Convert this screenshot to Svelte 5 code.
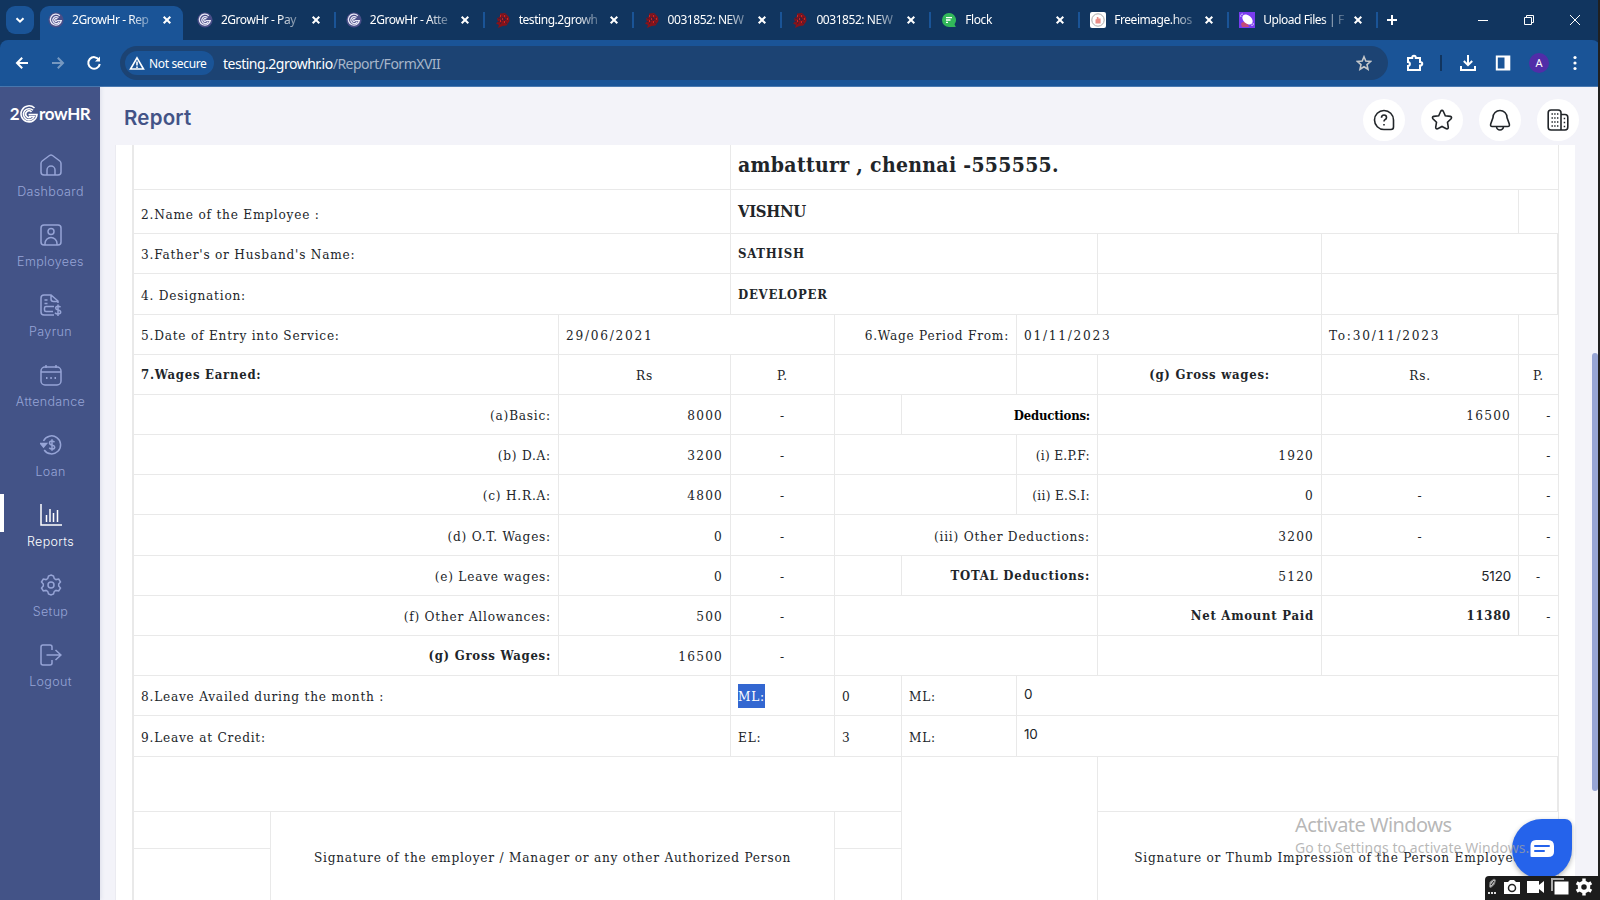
<script lang="ts">
    type Cell = {
        t?: string;
        span?: number;
        rows?: number;
        cls?: string;
    };

    const tabs = [
        { title: "2GrowHr - Rep", icon: "grow", active: true },
        { title: "2GrowHr - Pay", icon: "grow" },
        { title: "2GrowHr - Atte", icon: "grow" },
        { title: "testing.2growh", icon: "mantis" },
        { title: "0031852: NEW |", icon: "mantis" },
        { title: "0031852: NEW |", icon: "mantis" },
        { title: "Flock", icon: "flock" },
        { title: "Freeimage.hos", icon: "free" },
        { title: "Upload Files | F", icon: "upload" },
    ];

    const menu = [
        "Dashboard",
        "Employees",
        "Payrun",
        "Attendance",
        "Loan",
        "Reports",
        "Setup",
        "Logout",
    ];

    const columns = [137, 288, 172, 104, 67, 115, 81, 224, 197, 40];

    const earning = (label: string, amount: string, bold = ""): Cell[] => [
        { t: label, span: 2, cls: "right " + bold },
        { t: amount, cls: "right num" },
        { t: "-", cls: "center" },
    ];

    const rows: { h: number; cells: Cell[] }[] = [
        {
            h: 45,
            cells: [
                { span: 3 },
                { t: "ambatturr , chennai -555555.", span: 7, cls: "address" },
            ],
        },
        {
            h: 44,
            cells: [
                { t: "2.Name of the Employee :", span: 3, cls: "low" },
                { t: "VISHNU", span: 6, cls: "name" },
                {},
            ],
        },
        {
            h: 40,
            cells: [
                { t: "3.Father's or Husband's Name:", span: 3 },
                { t: "SATHISH", span: 4, cls: "bold" },
                {},
                { span: 2, cls: "edge" },
            ],
        },
        {
            h: 41,
            cells: [
                { t: "4. Designation:", span: 3 },
                { t: "DEVELOPER", span: 4, cls: "bold" },
                {},
                { span: 2, cls: "edge" },
            ],
        },
        {
            h: 40,
            cells: [
                { t: "5.Date of Entry into Service:", span: 2 },
                { t: "29/06/2021", span: 2, cls: "date" },
                { t: "6.Wage Period From:", span: 2, cls: "right" },
                { t: "01/11/2023", span: 2, cls: "date" },
                { t: "To:30/11/2023", cls: "date" },
                {},
            ],
        },
        {
            h: 40,
            cells: [
                { t: "7.Wages Earned:", span: 2, cls: "bold" },
                { t: "Rs", cls: "center" },
                { t: "P.", cls: "center" },
                { span: 2 },
                {},
                { t: "(g) Gross wages:", cls: "bold center" },
                { t: "Rs.", cls: "center" },
                { t: "P.", cls: "center" },
            ],
        },
        {
            h: 40,
            cells: [
                ...earning("(a)Basic:", "8000"),
                {},
                { t: "Deductions:", span: 2, cls: "right tight" },
                {},
                { t: "16500", cls: "right num" },
                { t: "-", cls: "right" },
            ],
        },
        {
            h: 40,
            cells: [
                ...earning("(b) D.A:", "3200"),
                { span: 2 },
                { t: "(i) E.P.F:", cls: "right initials" },
                { t: "1920", cls: "right num" },
                {},
                { t: "-", cls: "right" },
            ],
        },
        {
            h: 40,
            cells: [
                ...earning("(c) H.R.A:", "4800"),
                { span: 2 },
                { t: "(ii) E.S.I:", cls: "right initials" },
                { t: "0", cls: "right num" },
                { t: "-", cls: "center" },
                { t: "-", cls: "right" },
            ],
        },
        {
            h: 41,
            cells: [
                ...earning("(d) O.T. Wages:", "0"),
                { t: "(iii) Other Deductions:", span: 3, cls: "right" },
                { t: "3200", cls: "right num" },
                { t: "-", cls: "center" },
                { t: "-", cls: "right" },
            ],
        },
        {
            h: 40,
            cells: [
                ...earning("(e) Leave wages:", "0"),
                {},
                { t: "TOTAL Deductions:", span: 2, cls: "right bold" },
                { t: "5120", cls: "right num" },
                { t: "5120", cls: "right sans" },
                { t: "-", cls: "center" },
            ],
        },
        {
            h: 40,
            cells: [
                ...earning("(f) Other Allowances:", "500"),
                { span: 3 },
                { t: "Net Amount Paid", cls: "right bold" },
                { t: "11380", cls: "right bold" },
                { t: "-", cls: "right" },
            ],
        },
        {
            h: 40,
            cells: [
                ...earning("(g) Gross Wages:", "16500", "bold"),
                { span: 3 },
                {},
                { span: 2 },
            ],
        },
        {
            h: 40,
            cells: [
                { t: "8.Leave Availed during the month :", span: 3 },
                { t: "ML:", cls: "selected" },
                { t: "0", cls: "num" },
                { t: "ML:" },
                { t: "0", span: 4, cls: "sans up" },
            ],
        },
        {
            h: 41,
            cells: [
                { t: "9.Leave at Credit:", span: 3 },
                { t: "EL:" },
                { t: "3", cls: "num" },
                { t: "ML:" },
                { t: "10", span: 4, cls: "sans up" },
            ],
        },
        {
            h: 55,
            cells: [
                { span: 5 },
                { span: 2, rows: 3 },
                { span: 3, cls: "edge" },
            ],
        },
        {
            h: 37,
            cells: [
                {},
                {
                    t: "Signature of the employer / Manager or any other Authorized Person",
                    span: 3,
                    rows: 2,
                    cls: "center",
                },
                {},
                {
                    t: "Signature or Thumb Impression of the Person Employed",
                    span: 3,
                    rows: 2,
                    cls: "center",
                },
            ],
        },
        { h: 53, cells: [{}, {}] },
    ];
</script>

<div class="screen">
    <div class="tab-strip">
        <button class="tab-search" aria-label="Search tabs">
            <svg width="12" height="12" viewBox="0 0 12 12"
                ><path d="M2.5 4.2 6 7.7l3.5-3.5" class="line" /></svg
            >
        </button>
        <div class="tabs">
            {#each tabs as tab}
                <div class="tab" class:active={tab.active}>
                    <svg
                        class="favicon"
                        width="16"
                        height="16"
                        viewBox="0 0 16 16"
                    >
                        {#if tab.icon === "grow"}
                            <circle cx="8" cy="8" r="7.6" fill="#4a4e88" />
                            <g fill="none" stroke="#e9e9f6" stroke-width="1.3">
                                <path d="M11.8 3.8A5.5 5.5 0 1 0 13.3 8.6H8.5" />
                                <path d="M10.5 5.4A3.5 3.5 0 1 0 11.3 9.9" />
                                <path d="M9.3 7A1.5 1.5 0 1 0 9 9.3" />
                            </g>
                        {:else if tab.icon === "mantis"}
                            <path
                                d="M5 1.5 10 1l4 4 .5 4-3 4.5-4 .5-4.5 2 1-3-3-1.500 2-2-1-3 3-2z"
                                fill="#86131a"
                            />
                            <path
                                d="M3 6l10 2M5 3l7 9M10 2 5 13M3 10l9-5"
                                stroke="#35213f"
                                stroke-width="1"
                                stroke-dasharray="2 1"
                            />
                            <path
                                d="M5 4h1M9 4h1M7 7h1M12 7h1M5 9h1M9 10h1"
                                stroke="#f02820"
                                stroke-width="1.4"
                            />
                        {:else if tab.icon === "flock"}
                            <path
                                d="M8 1a7 7 0 1 0 0 14h6.800l-1.300-2.700A7 7 0 0 0 8 1z"
                                fill="#32b85a"
                            />
                            <path
                                d="M5 5.6h6M5 8h4.5M5 10.4h2"
                                stroke="#fff"
                                stroke-width="1.3"
                            />
                        {:else if tab.icon === "free"}
                            <rect width="16" height="16" rx="2" fill="#fff" />
                            <circle
                                cx="8"
                                cy="8"
                                r="6.2"
                                fill="none"
                                stroke="#aaa"
                            />
                            <path
                                d="M5.5 11.5v-4l1.3-.4V5h1.6v1.5h2.2v5z"
                                fill="#ea8d87"
                            />
                        {:else}
                            <rect width="16" height="16" fill="#7a3cf0" />
                            <path d="M2 12c1-3 6-4 8 3H3z" fill="#c44b7a" />
                            <ellipse
                                cx="8.5"
                                cy="7.5"
                                rx="6"
                                ry="4"
                                transform="rotate(42 8.5 7.5)"
                                fill="#fff"
                            />
                            <path
                                d="M2 5C1 3 2 2 4 2m8 11c2 1 3 0 2-2"
                                stroke="#d9c5ff"
                                fill="none"
                            />
                        {/if}
                    </svg>
                    <span class="tab-title">{tab.title}</span>
                    <svg width="10" height="10" viewBox="0 0 10 10"
                        ><path d="m1.7 1.7 6.6 6.6m0-6.6L1.7 8.3" class="line" /></svg
                    >
                </div>
            {/each}
        </div>
        <svg class="new-tab" width="12" height="12" viewBox="0 0 12 12"
            ><path d="M6 1v10M1 6h10" class="line" /></svg
        >
        <div class="window-controls">
            <svg width="12" height="12" viewBox="0 0 12 12"
                ><path d="M1 6.5h10" class="thin" /></svg
            >
            <svg width="12" height="12" viewBox="0 0 12 12"
                ><path d="M1.5 3.5h7v7h-7zM3.5 3.5v-2h7v7h-2" class="thin" /></svg
            >
            <svg width="12" height="12" viewBox="0 0 12 12"
                ><path d="m1 1 10 10m0-10L1 11" class="thin" /></svg
            >
        </div>
    </div>

    <div class="toolbar">
        <div class="nav">
            <svg width="16" height="16" viewBox="0 0 16 16"
                ><path d="M14 8H3m5.2-5.2L3 8l5.2 5.2" class="line" /></svg
            >
            <svg class="dim" width="16" height="16" viewBox="0 0 16 16"
                ><path d="M2 8h11M7.8 2.8 13 8l-5.2 5.2" class="line" /></svg
            >
            <svg width="16" height="16" viewBox="0 0 16 16"
                ><path d="M13 4.8A5.8 5.8 0 1 0 13.800 9" class="line" /><path
                    d="M14 1.5v5H9z"
                    fill="#fff"
                /></svg
            >
        </div>
        <div class="address-bar">
            <div class="chip">
                <svg width="16" height="14" viewBox="0 0 16 14"
                    ><path d="M8 1.8 14.5 13h-13z" class="line" /><path
                        d="M8 5.5v4m0 1V12"
                        class="line"
                    /></svg
                >
                <span>Not secure</span>
            </div>
            <span class="url">testing.2growhr.io<i>/Report/FormXVII</i></span>
            <svg class="bookmark" width="16" height="16" viewBox="0 0 16 16"
                ><path
                    d="m8 1.8 1.8 4.3 4.7.4L11 9.6l1 4.6-4-2.5-4 2.500 1-4.600-3.500-3.100 4.700-.4z"
                /></svg
            >
        </div>
        <div class="tools">
            <svg width="18" height="18" viewBox="0 0 18 18"
                ><path
                    d="M2 4h4.2c0-3 3.6-3 3.6 0H14v4c3 0 3 3.6 0 3.6V16H2v-4c2.5-.3 2.5-3.7 0-4z"
                    class="line"
                /></svg
            >
            <span class="bar"></span>
            <svg width="18" height="18" viewBox="0 0 18 18"
                ><path d="M9 1v10M4.8 7 9 11.2 13.2 7M2 12v4h14v-4" class="line" /></svg
            >
            <svg width="16" height="16" viewBox="0 0 16 16"
                ><rect x="1.8" y="1.5" width="12.5" height="13" class="line" /><path
                    d="M9.5 2h5v12h-5z"
                    fill="#fff"
                /></svg
            >
            <span class="avatar">A</span>
            <svg class="more" width="4" height="16" viewBox="0 0 4 16" fill="#fff"
                ><circle cx="2" cy="2.5" r="1.6" /><circle
                    cx="2"
                    cy="8"
                    r="1.6"
                /><circle cx="2" cy="13.5" r="1.6" /></svg
            >
        </div>
    </div>

    <div class="app">
        <aside class="sidebar">
            <div class="logo">
                <span>2</span>
                <svg width="18" height="18" viewBox="0 0 18 18"
                    ><path d="M14.5 3A8 8 0 1 0 17 9.500H8.500" /><path
                        d="M13 5.3a5.6 5.6 0 1 0 1.2 6.2H9"
                    /><path d="M11.5 7a3.3 3.3 0 1 0-.5 4.800" /></svg
                >
                <span>rowHR</span>
            </div>
            {#each menu as item}
                <div class="menu-item" class:current={item === "Reports"}>
                    <svg width="22" height="22" viewBox="0 0 22 22">
                        {#if item === "Dashboard"}
                            <path
                                d="M1 9.5Q1 8 2.2 7L9.5 1.5q1.5-1 3 0L19.8 7Q21 8 21 9.5V18q0 3-3 3H4q-3 0-3-3z"
                            />
                            <path d="M7 21v-5a4 4 0 0 1 8 0v5" />
                        {:else if item === "Employees"}
                            <rect x="1" y="1" width="20" height="20" rx="3" />
                            <circle cx="11" cy="7.5" r="3" />
                            <path d="M5 21v-1.500a6 6 0 0 1 12 0V21" />
                        {:else if item === "Payrun"}
                            <path
                                d="M14 21H4q-3 0-3-3V4q0-3 3-3h7l7 6v2M11 1v4q0 2.5 2.5 2.5H18M4.5 6h3M4.5 9.5h3M14 12.5H6q-1.5 0-1.5 1.5v2q0 1.5 1.5 1.5h7"
                            />
                            <path
                                d="M20.5 13.2q-1-1.2-2.5-1-2.3 0-2.3 1.8 0 1.5 2.3 1.9 2.7.5 2.7 2.2 0 2-2.7 2-2 0-3-1.4M18 10.5V22"
                            />
                        {:else if item === "Attendance"}
                            <rect x="1" y="3" width="20" height="18" rx="4" />
                            <path d="M1 8h20M6 1v3M16 1v3" />
                            <path
                                d="M6 14h1.5M10.3 14h1.5M14.5 14H16"
                                class="dots"
                            />
                        {:else if item === "Loan"}
                            <path d="M3.5 7a9 9 0 1 1 .7 9" />
                            <path d="M.5 9.5h6L3.500 13z" fill="currentColor" />
                            <path
                                d="M14.5 8.2Q13.6 7 12 7 9.5 7 9.5 9q0 1.6 2.5 2t2.7 2.2Q14.7 15 12 15q-1.8 0-2.7-1.3M12 5.2v11.6"
                            />
                        {:else if item === "Reports"}
                            <path d="M1 0v21h21" />
                            <path d="M6.5 11v7M10 5v13M13.5 9v9M17.5 6v12" />
                        {:else if item === "Setup"}
                            <path
                                d="m11 1 2.5 1 .8 2.6 1.7 1 2.7-.6 1.8 3-1.8 2v2l1.8 2-1.8 3-2.7-.6-1.7 1-.8 2.6L11 21l-2.5-1-.8-2.6-1.7-1-2.7.6-1.8-3 1.8-2v-2l-1.8-2 1.8-3 2.7.6 1.7-1L8.500 2z"
                            />
                            <circle cx="11" cy="11" r="3" />
                        {:else}
                            <path
                                d="M12 6V3q0-2-2-2H3Q1 1 1 3v16q0 2 2 2h7q2 0 2-2v-3M6.5 11H21M15.5 6l5.5 5-5.5 5"
                            />
                        {/if}
                    </svg>
                    <span>{item}</span>
                </div>
            {/each}
        </aside>

        <main>
            <header>
                <h1>Report</h1>
                <div class="actions">
                    <button aria-label="Help">
                        <svg width="22" height="22" viewBox="0 0 22 22"
                            ><path d="M11 1.5a9.5 9.5 0 0 0 0 19h7q2.5 0 2.5-2.5v-7A9.5 9.5 0 0 0 11 1.5z" /><path
                                d="M8.5 8.8q0-2.8 2.5-2.8t2.5 2.4q0 1.4-1.3 2.1T11 12.5m0 2.500v1.500"
                            /></svg
                        >
                    </button>
                    <button aria-label="Favourites">
                        <svg width="22" height="22" viewBox="0 0 22 22"
                            ><path
                                d="M9.7 2.3q1.3-1.8 2.6 0l2 4.5 5 .6q2 .5.8 2.3l-3.6 3.6.8 5q0 2-2 1.5L11 17.5l-4.3 2.3q-2 .5-2-1.5l.8-5-3.600-3.600Q.7 7.900 2.700 7.400l5-.6z"
                            /></svg
                        >
                    </button>
                    <button aria-label="Notifications">
                        <svg width="22" height="22" viewBox="0 0 22 22"
                            ><path
                                d="M4 8.5a7 7 0 0 1 14 0L20.3 15q.6 2.5-1.5 2.5H3.2Q1.1 17.5 1.7 15zM7.5 17.5a3.5 3.5 0 0 0 7 0"
                            /></svg
                        >
                    </button>
                    <button aria-label="Company">
                        <svg width="22" height="22" viewBox="0 0 22 22"
                            ><path
                                d="M14 21H4q-2.8 0-2.8-2.8V3.8Q1.2 1 4 1h7.2Q14 1 14 3.8zM14 5.5h4q2.8 0 2.8 2.8V18q0 3-2.8 3h-4"
                            /><path
                                d="M4.5 5h1.4m1.3 0h1.4M10 5h1.4M4.5 9h1.4m1.3 0h1.4M10 9h1.4M4.5 13h1.4m1.3 0h1.4m1.4 0h1.4M4.5 17h1.4m1.3 0h1.4m1.4 0h1.4M16.7 9.5h1.5m-1.5 4h1.5m-1.500 4h1.500"
                            /></svg
                        >
                    </button>
                </div>
            </header>
            <section class="card">
                <table>
                    <colgroup>
                        {#each columns as width}
                            <col style:width="{width}px" />
                        {/each}
                    </colgroup>
                    <tbody>
                        {#each rows as row}
                            <tr style:height="{row.h}px">
                                {#each row.cells as cell}
                                    <td
                                        class={cell.cls}
                                        colspan={cell.span ?? 1}
                                        rowspan={cell.rows ?? 1}
                                        >{#if cell.t}<span>{cell.t}</span>{/if}</td
                                    >
                                {/each}
                            </tr>
                        {/each}
                    </tbody>
                </table>
            </section>
        </main>
    </div>

    <div class="scroll-thumb"></div>
    <div class="screen-edge"></div>
    <button class="chat" aria-label="Chat">
        <svg width="24" height="18" viewBox="0 0 24 18"
            ><path
                d="M6 0h12q6 0 6 6v6q0 5-6 5H2q-2 0-1.500-1.500V6Q.5 0 6 0z"
                fill="#fff"
            /><path
                d="M5 6h14M5 11h9"
                stroke="#2563eb"
                stroke-width="2"
                stroke-linecap="round"
            /></svg
        >
    </button>
    <div class="watermark">
        <strong>Activate Windows</strong>
        <span>Go to Settings to activate Windows.</span>
    </div>
    <div class="recorder">
        <svg width="10" height="20" viewBox="0 0 10 20"
            ><path
                d="m2.500 10 .5-5 4-3 1.500 1-1 4-3.500 3.500z"
                fill="#bbb"
                stroke="#777"
            /><path d="M4 8l3-4" stroke="#1c1c1c" /><path
                d="M1 16h2m1 0h2m1 0h2"
                stroke="#ddd"
                stroke-width="2"
            /></svg
        >
        <svg width="18" height="18" viewBox="0 0 18 18"
            ><path d="M1 4h4l2-2h4l2 2h4v12H1z" fill="#fff" /><circle
                cx="9"
                cy="10"
                r="3.5"
                fill="#fff"
                stroke="#222"
                stroke-width="1.5"
            /></svg
        >
        <svg width="18" height="18" viewBox="0 0 18 18"
            ><path d="M0 3h12v4l5-4v12l-5-4v4H0z" fill="#fff" /></svg
        >
        <svg width="18" height="18" viewBox="0 0 18 18"
            ><path d="M1 13V1h12" fill="none" stroke="#aaa" stroke-width="2" /><path
                d="M3.5 3.5h14v13h-14z"
                fill="#fff"
            /></svg
        >
        <svg width="18" height="18" viewBox="0 0 18 18"
            ><circle cx="9" cy="9" r="4.5" fill="none" stroke="#fff" stroke-width="3.5" /><path
                d="M9 .5v4m0 9v4M1.700 4.800l3.400 2m7.800 4.400 3.400 2M1.700 13.200l3.400-2m7.800-4.400 3.400-2"
                stroke="#fff"
                stroke-width="3.4"
            /></svg
        >
    </div>
</div>

<style>
    :global(body) {
        margin: 0;
        overflow: hidden;
    }

    .screen {
        position: relative;
        width: 1600px;
        height: 900px;
        overflow: hidden;
        display: flex;
        flex-direction: column;
        background: #11355f;
        font-family: "Noto Sans", "Open Sans", sans-serif;
        color: #fff;
    }

    button {
        border: 0;
        padding: 0;
        display: flex;
        align-items: center;
        justify-content: center;
    }

    svg {
        display: block;
        flex-shrink: 0;
    }

    .line {
        fill: none;
        stroke: #fff;
        stroke-width: 2;
    }

    .thin {
        fill: none;
        stroke: #fff;
        stroke-width: 1;
    }

    .tab-strip {
        height: 40px;
        flex-shrink: 0;
        display: flex;
        align-items: center;
        padding-left: 6px;
    }

    .tab-search {
        width: 28px;
        height: 28px;
        border-radius: 9px;
        background: #1a5497;
    }

    .tabs {
        display: flex;
        align-self: stretch;
        padding-left: 6px;
    }

    .tab {
        position: relative;
        box-sizing: border-box;
        width: 148.9px;
        padding: 0 17px 0 8px;
        display: flex;
        align-items: center;
    }

    .tab:not(.active)::after {
        content: "";
        position: absolute;
        right: 2px;
        top: 12px;
        width: 2px;
        height: 16px;
        background: #1a5497;
    }

    .tab.active::before {
        content: "";
        position: absolute;
        left: 0;
        top: 6px;
        width: 143px;
        height: 34px;
        border-radius: 9px 9px 0 0;
        background: #1a5497;
    }

    .tab.active > * {
        position: relative;
    }

    .tab-title {
        margin: 0 9px 0 8px;
        flex: 1;
        overflow: hidden;
        white-space: nowrap;
        font-size: 12px;
        line-height: 18px;
        letter-spacing: -0.45px;
        mask-image: linear-gradient(90deg, #000 58px, rgba(0, 0, 0, 0.25) 80px);
    }

    .new-tab {
        margin-left: 6px;
    }

    .window-controls {
        margin-left: auto;
        padding-right: 19px;
        display: flex;
        gap: 34px;
    }

    .toolbar {
        box-sizing: border-box;
        height: 47px;
        flex-shrink: 0;
        display: flex;
        align-items: center;
        padding: 0 22px 0 14px;
        background: #1a5497;
        border-bottom: 1px solid #4a79b0;
        border-radius: 8px 8px 0 0;
    }

    .nav {
        display: flex;
        gap: 20px;
        width: 106px;
    }

    .dim {
        opacity: 0.4;
    }

    .address-bar {
        box-sizing: border-box;
        width: 1268px;
        height: 34px;
        border-radius: 17px;
        background: #1c4373;
        display: flex;
        align-items: center;
        padding: 0 16px 0 5px;
    }

    .chip {
        box-sizing: border-box;
        width: 89px;
        height: 24px;
        border-radius: 12px;
        background: #1a5497;
        display: flex;
        align-items: center;
        gap: 4px;
        padding-left: 4px;
        font-size: 12px;
        white-space: nowrap;
        letter-spacing: -0.35px;
    }

    .chip .line {
        stroke-width: 1.6;
    }

    .url {
        margin-left: 9px;
        font-size: 14px;
        letter-spacing: -0.5px;
    }

    .url i {
        font-style: normal;
        color: #a6b5c9;
    }

    .bookmark {
        margin-left: auto;
        fill: none;
        stroke: #c4c7ca;
        stroke-width: 1.6;
    }

    .tools {
        flex: 1;
        display: flex;
        align-items: center;
        gap: 18px;
        padding-left: 18px;
    }

    .bar {
        width: 2px;
        height: 16px;
        margin: 0 -1px 0 -2px;
        background: #11355f;
    }

    .more {
        margin-left: 6px;
    }

    .avatar {
        width: 20px;
        height: 20px;
        border-radius: 50%;
        background: #512da8;
        font-size: 11px;
        line-height: 20px;
        text-align: center;
    }

    .app {
        flex: 1;
        min-height: 0;
        display: flex;
        background: #f3f3f9;
    }

    .sidebar {
        box-sizing: border-box;
        width: 100px;
        flex-shrink: 0;
        background: #435387;
        box-shadow: 1px 0 4px rgba(60, 70, 120, 0.12);
        font-family: Inter, sans-serif;
    }

    .logo {
        height: 53px;
        padding-bottom: 1px;
        display: flex;
        align-items: center;
        justify-content: center;
        font-family: Lato, sans-serif;
        font-weight: 700;
        font-size: 17px;
        letter-spacing: -0.4px;
    }

    .logo svg {
        fill: none;
        stroke: #fff;
        stroke-width: 1.6;
        margin: 0 1px;
    }

    .menu-item {
        height: 57px;
        padding: 13px 0 0 1px;
        display: flex;
        flex-direction: column;
        align-items: center;
        color: #96a4d6;
        font-size: 12.5px;
        font-weight: 300;
        line-height: 18px;
        letter-spacing: 0.35px;
        gap: 7px;
    }

    .menu-item svg {
        fill: none;
        stroke: currentColor;
        stroke-width: 1.5;
    }

    .dots {
        stroke-width: 2;
    }

    .menu-item.current {
        position: relative;
        color: #fff;
    }

    .menu-item.current::before {
        content: "";
        position: absolute;
        left: 0;
        top: 3px;
        width: 4px;
        height: 38px;
        background: #fff;
    }

    main {
        flex: 1;
        min-width: 0;
        display: flex;
        flex-direction: column;
    }

    header {
        height: 58px;
        flex-shrink: 0;
        display: flex;
        justify-content: space-between;
        padding: 0 21px 0 24px;
    }

    h1 {
        margin: 18px 0 0;
        font: 600 20.5px/26px Inter, sans-serif;
        letter-spacing: 0.2px;
        color: #435387;
    }

    .actions {
        display: flex;
        gap: 16px;
        padding-top: 12px;
    }

    .actions button {
        width: 42px;
        height: 42px;
        border-radius: 50%;
        background: #fff;
    }

    .actions svg {
        fill: none;
        stroke: #212529;
        stroke-width: 1.6;
    }

    .card {
        flex: 1;
        overflow: hidden;
        margin: 0 25px 0 15px;
        padding-left: 16px;
        background: #fff;
        border-left: 1px solid #ebebf1;
    }

    table {
        width: 1427px;
        table-layout: fixed;
        border-collapse: separate;
        border-spacing: 0;
        border-left: 2px solid #e9e9e9;
        box-sizing: border-box;
        color: #212529;
        font-family: "DejaVu Serif Condensed", "DejaVu Serif", serif;
        font-stretch: condensed;
        font-size: 13.5px;
        line-height: 24px;
        letter-spacing: 0.78px;
    }

    td {
        padding: 1px 7px 0;
        border-right: 1px solid #e9e9e9;
        border-bottom: 1px solid #e9e9e9;
        white-space: nowrap;
        overflow: hidden;
    }

    .right {
        text-align: right;
    }

    .center {
        text-align: center;
    }

    .bold {
        font-weight: 700;
        font-size: 13px;
        letter-spacing: 0.75px;
    }

    .num {
        letter-spacing: 1.2px;
    }

    .date {
        letter-spacing: 1.75px;
    }

    .initials {
        letter-spacing: 0.3px;
    }

    .low {
        padding-top: 5px;
    }

    .address {
        font-size: 21px;
        font-weight: 700;
        letter-spacing: 0.3px;
        padding-bottom: 6px;
    }

    .name {
        font-size: 16.5px;
        font-weight: 700;
        letter-spacing: -0.3px;
        padding-top: 1px;
    }

    .tight {
        font-weight: 700;
        font-size: 13px;
        color: #000;
        letter-spacing: -0.2px;
        padding-top: 2px;
    }

    .sans {
        font-family: Inter, sans-serif;
        font-size: 13.5px;
        font-weight: 400;
        letter-spacing: -0.2px;
    }

    .up {
        padding: 0 7px 4px;
    }

    .edge {
        border-right-width: 2px;
    }

    .selected span {
        display: inline-block;
        background: #3367d1;
        color: #fff;
    }

    .scroll-thumb {
        position: absolute;
        right: 2px;
        top: 353px;
        width: 6px;
        height: 438px;
        border-radius: 3px;
        background: #97a5d4;
    }

    .screen-edge {
        position: absolute;
        right: 0;
        top: 0;
        width: 2px;
        height: 900px;
        background: #202020;
    }

    .chat {
        position: absolute;
        left: 1512px;
        top: 819px;
        width: 60px;
        height: 60px;
        border-radius: 50% 7px 50% 50%;
        background: #2563eb;
        box-shadow: 0 2px 5px rgba(0, 0, 0, 0.3);
    }

    .watermark {
        position: absolute;
        left: 1295px;
        top: 811px;
        display: flex;
        flex-direction: column;
        color: rgba(160, 160, 160, 0.75);
        white-space: nowrap;
    }

    .watermark strong {
        font-weight: 400;
        font-size: 20px;
        line-height: 28px;
        letter-spacing: -0.55px;
    }

    .watermark span {
        font-size: 14px;
        line-height: 18px;
        letter-spacing: 0.07px;
    }

    .recorder {
        position: absolute;
        right: 0;
        bottom: 0;
        box-sizing: border-box;
        width: 115px;
        height: 24px;
        border-radius: 4px 0 0 0;
        background: #1c1c1c;
        display: flex;
        align-items: center;
        justify-content: space-between;
        padding: 0 7px 2px 2px;
    }
</style>
